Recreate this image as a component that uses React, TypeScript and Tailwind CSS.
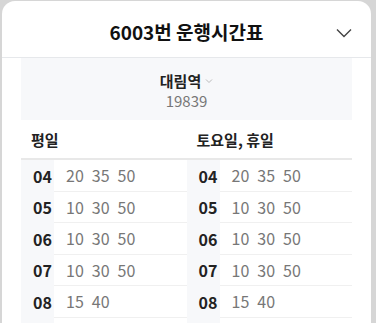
import React from 'react';

const rows: { hour: string; weekday: string[]; holiday: string[] }[] = [
  { hour: '04', weekday: ['20', '35', '50'], holiday: ['20', '35', '50'] },
  { hour: '05', weekday: ['10', '30', '50'], holiday: ['10', '30', '50'] },
  { hour: '06', weekday: ['10', '30', '50'], holiday: ['10', '30', '50'] },
  { hour: '07', weekday: ['10', '30', '50'], holiday: ['10', '30', '50'] },
  { hour: '08', weekday: ['15', '40'], holiday: ['15', '40'] },
  { hour: '', weekday: [], holiday: [] },
];

const Cell: React.FC<{ hour: string; mins: string[] }> = ({ hour, mins }) => (
  <div className="flex h-[31.5px] flex-1">
    <div className="flex w-[33px] items-center bg-[#f7f8fa] pl-[12px] text-[16px] font-bold text-[#222]">
      {hour}
    </div>
    <div className="flex flex-1 items-center gap-[8px] border-b border-[#f0f0f0] pl-[12px] text-[16px] text-[#777]">
      {mins.map((m, i) => (
        <span key={i}>{m}</span>
      ))}
    </div>
  </div>
);

export default function App() {
  return (
    <div
      className="h-[323px] w-[376px] overflow-hidden bg-[#d6d6d6] pt-[1px]"
      style={{ fontFamily: '"Noto Sans CJK KR", "Noto Sans", sans-serif' }}
    >
      <div className="ml-[2px] h-[340px] w-[369px] rounded-t-[13px] bg-white">
        {/* Header */}
        <div className="relative flex h-[57px] items-center justify-center border-b border-[#e6e8eb]">
          <h1 className="pt-[6px] text-[19px] font-bold text-[#111]">6003번 운행시간표</h1>
          <svg
            className="absolute right-[19px] top-[27px]"
            width="16"
            height="10"
            viewBox="0 0 16 10"
            fill="none"
            stroke="#444"
            strokeWidth="1.4"
          >
            <path d="M1 1.5l7 7 7-7" />
          </svg>
        </div>

        <div className="mx-[19px]">
          {/* Station */}
          <div className="flex h-[62px] flex-col items-center justify-center bg-[#f7f8fa] pt-[4px]">
            <div className="flex items-center gap-[4px] text-[15px] font-bold leading-[20px] text-[#222]">
              대림역
              <svg width="8" height="6" viewBox="0 0 8 6" fill="none" stroke="#bbb" strokeWidth="1">
                <path d="M1 1.5l3 3 3-3" />
              </svg>
            </div>
            <div className="text-[15px] leading-[20px] text-[#777]">19839</div>
          </div>

          {/* Column headers */}
          <div className="flex h-[40px] items-center border-b-2 border-[#e8e8e8] pt-[2px] text-[15px] font-bold text-[#222]">
            <div className="flex-1 pl-[10px]">평일</div>
            <div className="flex-1 pl-[10px]">토요일, 휴일</div>
          </div>

          {/* Rows */}
          {rows.map((r, i) => (
            <div key={i} className="flex">
              <Cell hour={r.hour} mins={r.weekday} />
              <Cell hour={r.hour} mins={r.holiday} />
            </div>
          ))}
        </div>
      </div>
    </div>
  );
}
